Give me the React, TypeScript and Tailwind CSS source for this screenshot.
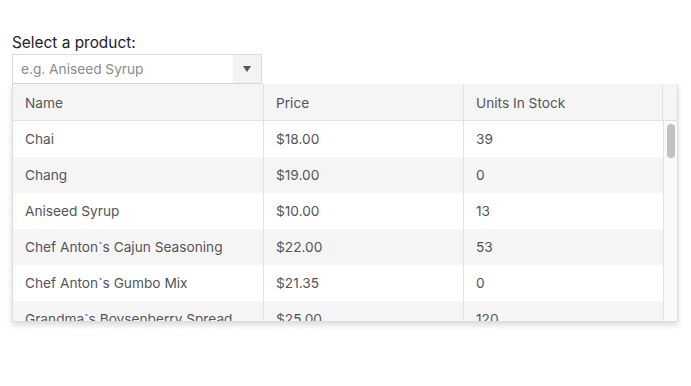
const products = [
  { name: 'Chai', price: '$18.00', stock: 39 },
  { name: 'Chang', price: '$19.00', stock: 0 },
  { name: 'Aniseed Syrup', price: '$10.00', stock: 13 },
  { name: 'Chef Anton`s Cajun Seasoning', price: '$22.00', stock: 53 },
  { name: 'Chef Anton`s Gumbo Mix', price: '$21.35', stock: 0 },
  { name: 'Grandma`s Boysenberry Spread', price: '$25.00', stock: 120 },
];

export default function App() {
  return (
    <div className="h-[386px] w-[691px] bg-white pl-3 pt-[33px] font-['Inter',sans-serif]">
      <label className="block text-[15.4px] leading-[20px] text-[#222]">Select a product:</label>
      <div className="mt-[1px] flex h-[30px] w-[250px] border border-[#dcdcdc] bg-white">
        <div className="flex-1 pl-2 text-[13.7px] leading-[28px] text-[#8a8a8a]">e.g. Aniseed Syrup</div>
        <div className="flex w-[28px] items-center justify-center bg-[#f3f3f3]">
          <svg width="10" height="6" viewBox="0 0 10 6"><path d="M1 0h8L5 6z" fill="#555" /></svg>
        </div>
      </div>
      <div className="relative h-[238px] w-[666px] overflow-hidden border border-t-0 border-[#dcdcdc] shadow-[0_3px_6px_rgba(0,0,0,0.15)]">
        <div className="flex h-[37px] border-b border-[#e2e2e2] bg-[#f5f5f5] text-[13.7px] text-[#555]">
          <div className="w-[251px] border-r border-[#e2e2e2] pl-3 pt-[1px] leading-[36px]">Name</div>
          <div className="w-[200px] border-r border-[#e2e2e2] pl-3 pt-[1px] leading-[36px]">Price</div>
          <div className="w-[199px] border-r border-[#e2e2e2] pl-3 pt-[1px] leading-[36px]">Units In Stock</div>
          <div className="flex-1" />
        </div>
        <div className="flex">
          <div className="w-[650px]">
            {products.map((p, i) => (
              <div key={p.name} className={`flex h-[36px] text-[13.7px] text-[#555] ${i % 2 ? 'bg-[#f5f5f5]' : 'bg-white'}`}>
                <div className="w-[251px] border-r border-[#e2e2e2] pl-3 leading-[36px]">{p.name}</div>
                <div className="w-[200px] border-r border-[#e2e2e2] pl-3 leading-[36px]">{p.price}</div>
                <div className="w-[199px] pl-3 leading-[36px]">{p.stock}</div>
              </div>
            ))}
          </div>
          <div className="h-[200px] w-[15px] border-l border-[#e2e2e2] bg-[#fafafa] pl-[3px] pt-[3px]">
            <div className="h-[34px] w-[8px] rounded-full bg-[#c1c1c1]" />
          </div>
        </div>
      </div>
    </div>
  );
}
